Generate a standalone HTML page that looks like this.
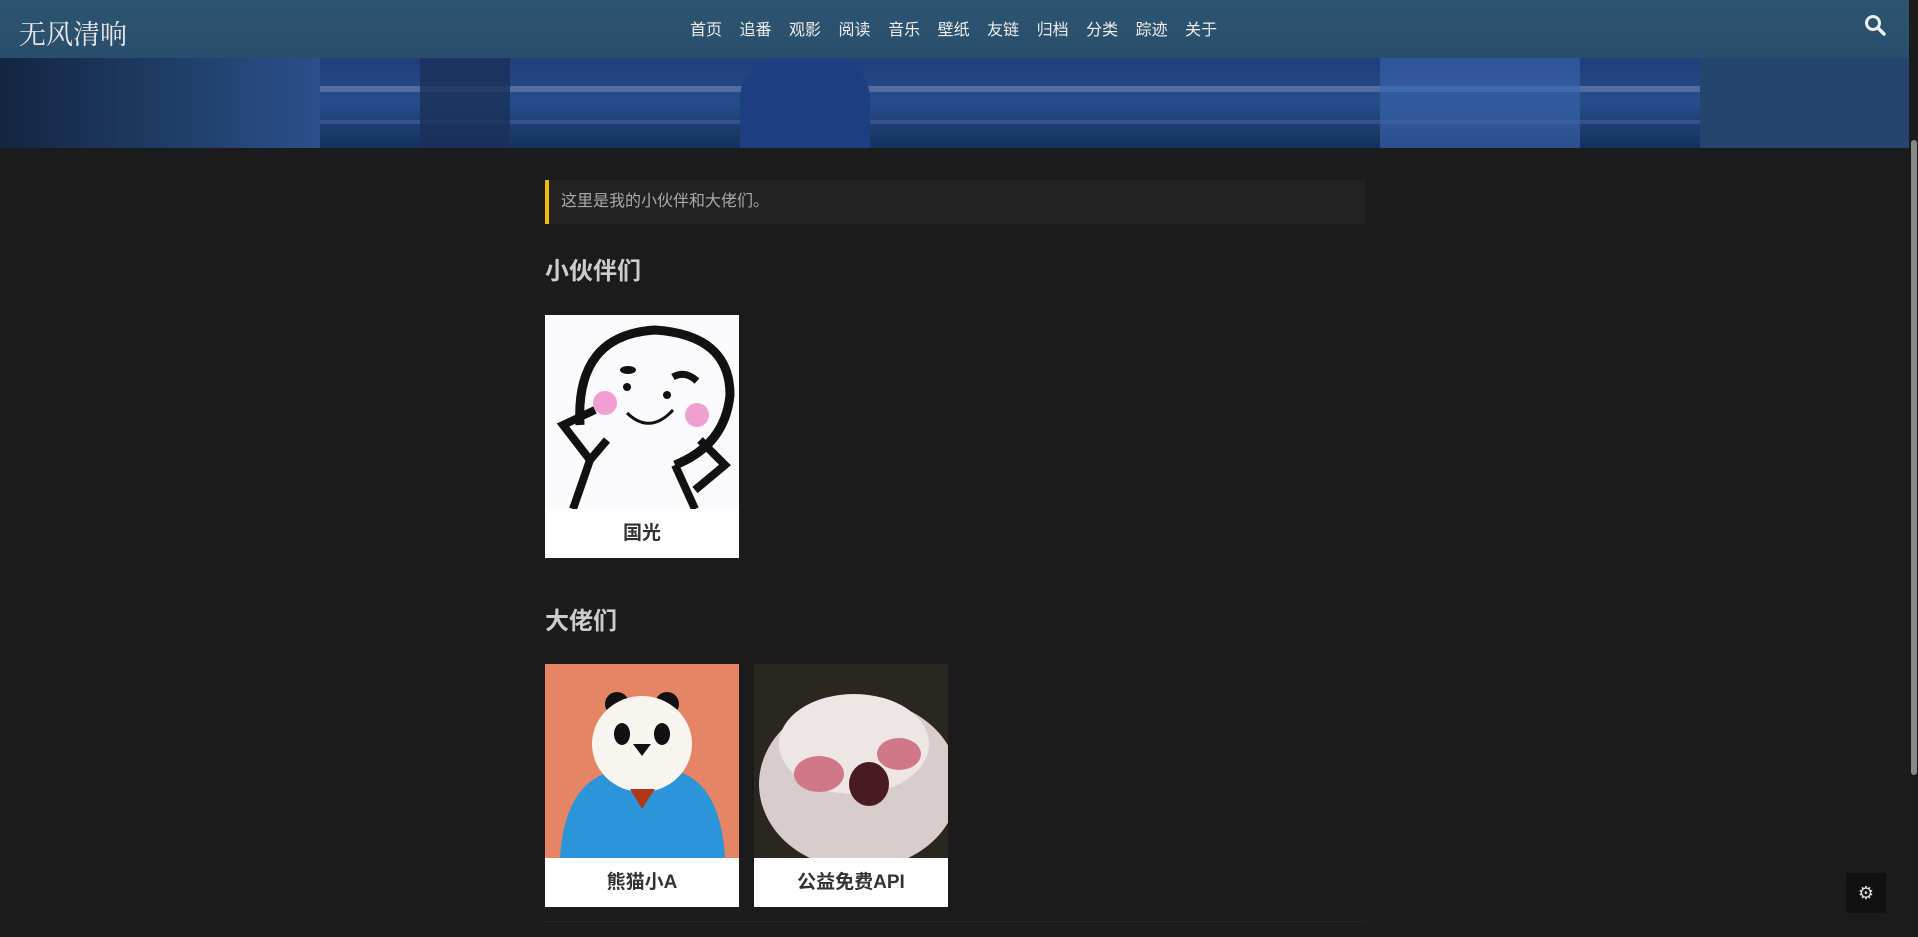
<!DOCTYPE html>
<html><head><meta charset="utf-8"><style>
*{margin:0;padding:0;box-sizing:border-box}
body{width:1918px;height:937px;overflow:hidden;background:#1b1b1b;font-family:"Liberation Sans","Noto Sans CJK SC",sans-serif;position:relative}
.banner{position:absolute;left:0;top:0;width:1909px;height:148px;overflow:hidden;
background:linear-gradient(180deg,#2d5470 0%,#24466a 38%,#1f3f7a 40%,#264a8a 55%,#2a5a9a 70%,#1d3d70 100%)}
.bar{position:absolute;left:0;top:0;width:100%;height:58px;background:rgba(45,85,110,.6)}
.logo{position:absolute;left:19px;top:13px;font-size:27px;color:#e8e8e8;font-family:"Liberation Serif","Noto Serif CJK SC",serif}
.nav{position:absolute;left:690px;top:16px;display:flex;gap:0}
.nav span{color:#eee;font-size:16px;margin-right:17.5px}
.rail{position:absolute;left:0;top:86px;width:100%;height:6px;background:#5b78b0}
.rail2{position:absolute;left:0;top:120px;width:100%;height:4px;background:#4a64a0}
.scroll{position:absolute;right:0;top:0;width:9px;height:937px;background:#1b1b1b}
.thumb{position:absolute;right:1px;top:140px;width:6px;height:635px;background:#888;border-radius:3px}
.bq{position:absolute;left:545px;top:180px;width:820px;height:44px;background:#222;border-left:4px solid #f5b800;color:#aaa;font-size:16px;line-height:44px;padding-left:12px}
h2{position:absolute;left:545px;font-size:24px;color:#ccc;font-weight:bold}
.card{position:absolute;width:194px;height:243px;background:#fff}
.card .img{width:194px;height:194px}
.card .name{height:49px;text-align:center;line-height:49px;font-size:19px;font-weight:bold;color:#333}
.line{position:absolute;left:545px;top:921px;width:820px;height:1px;background:#262626}
.gear{position:absolute;left:1846px;top:873px;width:40px;height:40px;background:#111;color:#ddd;font-size:18px;text-align:center;line-height:40px}
</style></head><body>
<div class="banner">
 <div class="rail"></div><div class="rail2"></div>
 <div style="position:absolute;left:0;top:58px;width:100%;height:90px;background:linear-gradient(180deg,rgba(20,40,80,.0),rgba(10,25,60,.35))"></div>
 <div style="position:absolute;left:740px;top:58px;width:130px;height:90px;background:#1b3f80;border-radius:40px 40px 0 0"></div>
 <div style="position:absolute;left:420px;top:58px;width:90px;height:90px;background:#1a2f5a;opacity:.8"></div>
 <div style="position:absolute;left:1380px;top:58px;width:200px;height:90px;background:#3a66b0;opacity:.6"></div>
 <div style="position:absolute;left:1700px;top:58px;width:209px;height:90px;background:#25446e"></div>
 <div style="position:absolute;left:0;top:58px;width:320px;height:90px;background:linear-gradient(90deg,#132640,#2a508a)"></div>
 <div class="bar"></div>
 <div class="logo">无风清响</div>
 <div class="nav"><span>首页</span><span>追番</span><span>观影</span><span>阅读</span><span>音乐</span><span>壁纸</span><span>友链</span><span>归档</span><span>分类</span><span>踪迹</span><span>关于</span></div>
 <svg style="position:absolute;left:1864px;top:14px" width="22" height="22" viewBox="0 0 22 22"><circle cx="9" cy="9" r="6.5" fill="none" stroke="#eee" stroke-width="3"/><line x1="14" y1="14" x2="20" y2="20" stroke="#eee" stroke-width="3.5" stroke-linecap="round"/></svg>
</div>
<div class="scroll"><div class="thumb"></div></div>
<div class="bq">这里是我的小伙伴和大佬们。</div>
<h2 style="top:251px">小伙伴们</h2>
<div class="card" style="left:545px;top:315px">
 <div class="img"><svg width="194" height="194" viewBox="0 0 194 194"><rect width="194" height="194" fill="#fbfbfd"/>
 <path d="M35 110 Q30 20 110 15 Q185 20 185 80 Q180 130 130 150" fill="none" stroke="#111" stroke-width="9"/>
 <path d="M50 95 L18 110 L45 145 L62 125" fill="none" stroke="#111" stroke-width="8"/>
 <path d="M45 145 L28 194 M130 150 L150 194 M155 125 L180 150 L150 175" fill="none" stroke="#111" stroke-width="8"/>
 <circle cx="60" cy="88" r="12" fill="#f0a0d0"/><circle cx="152" cy="100" r="12" fill="#f0a0d0"/>
 <ellipse cx="83" cy="55" rx="8" ry="4" fill="#111"/><circle cx="82" cy="72" r="4" fill="#111"/>
 <path d="M128 62 Q140 55 152 66" stroke="#111" stroke-width="7" fill="none"/><circle cx="122" cy="80" r="4" fill="#111"/>
 <path d="M82 98 Q105 120 128 95" stroke="#111" stroke-width="3" fill="none"/></svg></div>
 <div class="name">国光</div></div>
<h2 style="top:601px">大佬们</h2>
<div class="card" style="left:545px;top:664px">
 <div class="img"><svg width="194" height="194" viewBox="0 0 194 194"><rect width="194" height="194" fill="#e58565"/>
 <path d="M15 194 Q20 110 80 105 L120 105 Q175 110 180 194Z" fill="#2a95d8"/>
 <circle cx="72" cy="40" r="12" fill="#111"/><circle cx="122" cy="40" r="12" fill="#111"/>
 <ellipse cx="97" cy="80" rx="50" ry="48" fill="#f8f4f0"/>
 <ellipse cx="77" cy="70" rx="8" ry="11" fill="#111"/><ellipse cx="117" cy="70" rx="8" ry="11" fill="#111"/>
 <path d="M88 80 L106 80 L97 92Z" fill="#111"/><path d="M85 125 L97 145 L110 125Z" fill="#b03818"/></svg></div>
 <div class="name">熊猫小A</div></div>
<div class="card" style="left:754px;top:664px">
 <div class="img"><svg width="194" height="194" viewBox="0 0 194 194"><rect width="194" height="194" fill="#2a2620"/>
 <ellipse cx="105" cy="120" rx="100" ry="85" fill="#d8cccc"/><ellipse cx="100" cy="80" rx="75" ry="50" fill="#eee6e6"/>
 <ellipse cx="65" cy="110" rx="25" ry="18" fill="#d07888"/><ellipse cx="145" cy="90" rx="22" ry="16" fill="#d07888"/>
 <ellipse cx="115" cy="120" rx="20" ry="22" fill="#4a1a22"/></svg></div>
 <div class="name">公益免费API</div></div>
<div class="line"></div>
<div class="gear">⚙</div>
</body></html>
